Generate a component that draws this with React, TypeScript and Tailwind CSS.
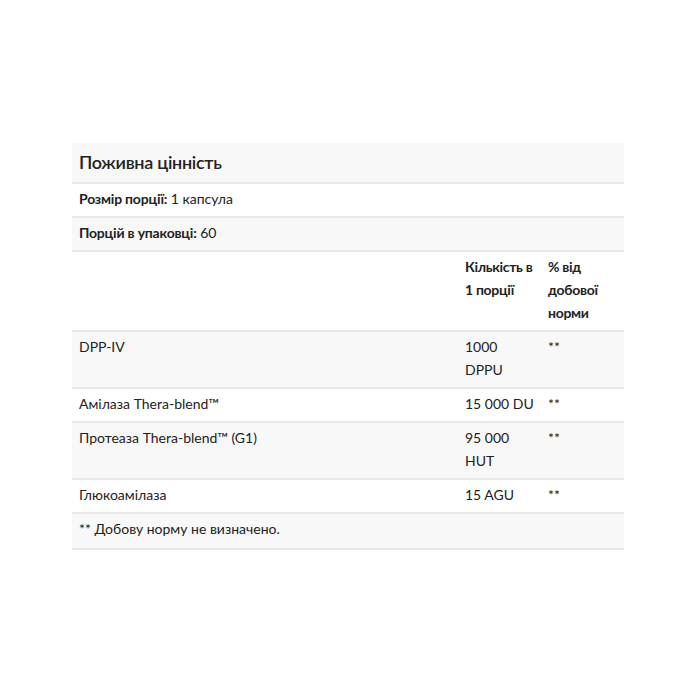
const ROWS = [
  { name: "DPP-IV", amount: "1000 DPPU", dv: "**" },
  { name: "Амілаза Thera-blend™", amount: "15 000 DU", dv: "**" },
  { name: "Протеаза Thera-blend™ (G1)", amount: "95 000 HUT", dv: "**" },
  { name: "Глюкоамілаза", amount: "15 AGU", dv: "**" },
];

const cell = "align-top px-[7px] pt-[3px] pb-[6px] border-b-2 border-[#e8e8e8]";

export default function App() {
  return (
    <div className="min-h-[700px] bg-white pt-[143px] pl-[72px] font-['Lato',sans-serif] text-[14px] leading-[23px] text-[#222]">
      <table className="w-[552px] border-collapse table-fixed">
        <colgroup>
          <col className="w-[386px]" />
          <col className="w-[83px]" />
          <col className="w-[83px]" />
        </colgroup>
        <tbody>
          <tr className="bg-[#f8f8f8]">
            <td colSpan={3} className="h-[40px] px-[7px] border-b-2 border-[#e8e8e8] align-middle text-[18px] font-semibold tracking-[-0.3px]">
              Поживна цінність
            </td>
          </tr>
          <tr>
            <td colSpan={3} className={cell}>
              <span className="font-bold tracking-[-0.2px]">Розмір порції:</span> 1 капсула
            </td>
          </tr>
          <tr className="bg-[#f8f8f8]">
            <td colSpan={3} className={cell}>
              <span className="font-bold tracking-[-0.2px]">Порцій в упаковці:</span> 60
            </td>
          </tr>
          <tr>
            <td className={cell}></td>
            <td className={`${cell} font-bold tracking-[-0.3px]`}>Кількість в 1 порції</td>
            <td className={`${cell} font-bold tracking-[-0.3px]`}>% від добової норми</td>
          </tr>
          {ROWS.map((r, i) => (
            <tr key={r.name} className={i % 2 === 0 ? "bg-[#f8f8f8]" : ""}>
              <td className={cell}>{r.name}</td>
              <td className={cell}>{r.amount}</td>
              <td className={cell}>{r.dv}</td>
            </tr>
          ))}
          <tr className="bg-[#f8f8f8]">
            <td colSpan={3} className={`${cell} h-[36px]`}>** Добову норму не визначено.</td>
          </tr>
        </tbody>
      </table>
    </div>
  );
}
